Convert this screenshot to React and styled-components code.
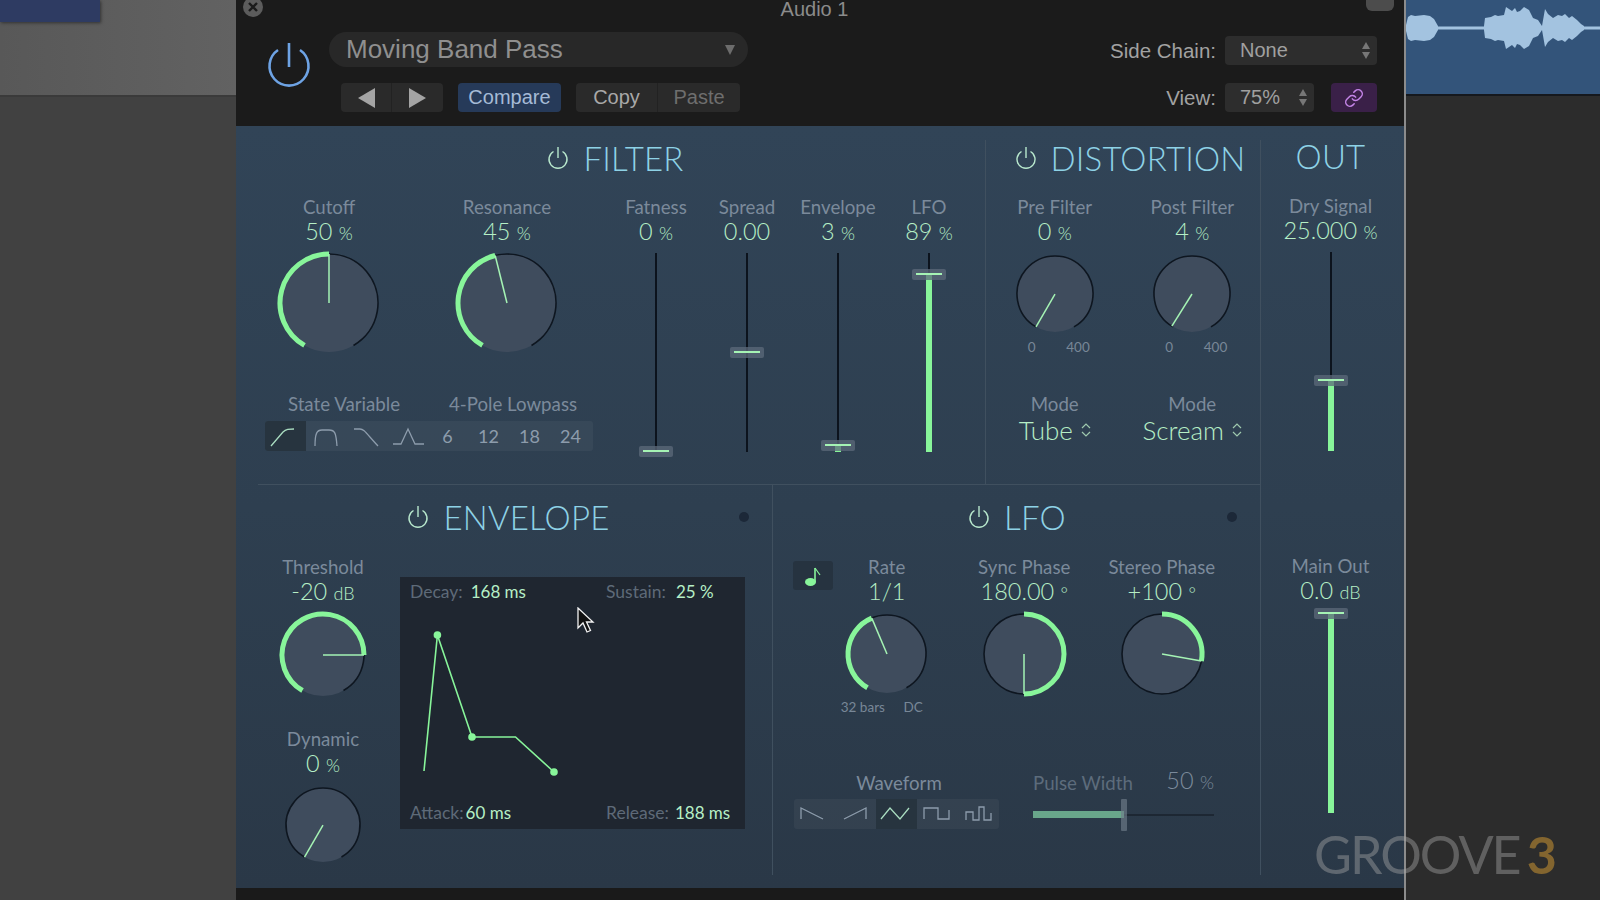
import React from 'react'
import styled, { createGlobalStyle } from 'styled-components'
import { Link } from 'lucide-react'

const GlobalStyle = createGlobalStyle`
  html, body {
    margin: 0;
    padding: 0;
    width: 1600px;
    height: 900px;
    overflow: hidden;
    background: #2c2c2c;
  }
`

const green = '#88f59a'
const valueGreen = '#b6efc6'

// page
const Page = styled.div`
  position: relative;
  display: grid;
  grid-template-columns: 236px 1168px 2px 194px;
  width: 1600px;
  height: 900px;
  overflow: hidden;
  font-family: Lato, 'Open Sans', sans-serif;
`
const LeftArea = styled.div`
  display: flex;
  flex-direction: column;
  border-right: 1px solid #777;
  margin-right: -1px;
  background: #414141;
`
const LeftTrack = styled.div`
  height: 95px;
  flex: none;
  background: linear-gradient(90deg, #585858, #626262);
  border-bottom: 2px solid #3a3a3a;
`
const Region = styled.div`
  width: 100px;
  height: 22px;
  background: #2e3b62;
  box-shadow: 1px 1px 3px #333;
`
const Strip = styled.div`
  background: #8c8c8c;
`
const RightArea = styled.div`
  display: flex;
  flex-direction: column;
  background: #2c2c2c;
`
const RightTrack = styled.div`
  height: 94px;
  flex: none;
  background: #33547a;
  border-bottom: 2px solid #15181d;
`

// plugin header
const Plugin = styled.div`
  display: flex;
  flex-direction: column;
  height: 900px;
`
const Header = styled.header`
  height: 126px;
  flex: none;
  background: #1b1b1b;
  color: #9a9a9a;
  font-family: 'Liberation Sans', Arial, sans-serif;
`
const TitleRow = styled.div`
  display: flex;
  justify-content: space-between;
  height: 32px;
  padding: 0 10px 0 7px;
  box-sizing: border-box;
`
const CloseButton = styled.svg`
  width: 20px;
  height: 20px;
  margin-top: -3px;
  flex: none;
`
const WindowTitle = styled.div`
  margin-top: 1px;
  font-size: 20px;
  line-height: 16px;
  color: #8b8b8b;
`
const MinButton = styled.div`
  width: 28px;
  height: 11px;
  border-radius: 0 0 6px 6px;
  background: #4c4c4c;
`
const HeaderBody = styled.div`
  display: flex;
  align-items: flex-start;
`
const MainPower = styled.svg`
  flex: none;
  width: 44px;
  height: 46px;
  margin: 10px 18px 0 31px;
`
const PresetColumn = styled.div`
  display: flex;
  flex-direction: column;
  width: 419px;
`
const PresetPill = styled.div`
  display: flex;
  align-items: center;
  justify-content: space-between;
  height: 35px;
  padding: 0 13px 0 17px;
  border-radius: 18px;
  background: #282828;
  font-size: 26px;
  color: #8f8f8f;
`
const PresetArrow = styled.span`
  width: 0;
  height: 0;
  border-left: 5px solid transparent;
  border-right: 5px solid transparent;
  border-top: 10px solid #6c6c6c;
`
const ButtonRow = styled.div`
  display: flex;
  margin: 16px 0 0 12px;
`
const ButtonGroup = styled.div`
  display: flex;
  flex: none;
  margin-right: ${(p) => p.$gap || 0}px;
  border-radius: 4px;
  overflow: hidden;
`
const HeadButton = styled.div`
  display: flex;
  align-items: center;
  justify-content: center;
  width: ${(p) => p.$w}px;
  height: 29px;
  font-size: 20px;
  background: ${(p) => (p.$active ? '#263a59' : '#2a2a2a')};
  color: ${(p) => (p.$active ? '#a5bad6' : p.$dim ? '#6e6e6e' : '#a8a8a8')};
  & + & {
    border-left: 1px solid #222;
  }
`
const Triangle = styled.span`
  width: 0;
  height: 0;
  border-top: 10px solid transparent;
  border-bottom: 10px solid transparent;
  ${(p) => (p.$left ? 'border-right' : 'border-left')}: 17px solid #a4a4a4;
`
const HeaderRight = styled.div`
  display: grid;
  grid-template-columns: auto 152px;
  column-gap: 9px;
  row-gap: 18px;
  align-items: center;
  margin: 4px 27px 0 auto;
`
const HeadLabel = styled.div`
  font-size: 20.5px;
  color: #a2a2a2;
  text-align: right;
`
const ViewRow = styled.div`
  display: flex;
  justify-content: space-between;
`
const Select = styled.div`
  display: flex;
  align-items: center;
  justify-content: space-between;
  box-sizing: border-box;
  width: ${(p) => p.$w}px;
  height: 29px;
  padding: 0 7px 0 15px;
  border-radius: 4px;
  background: #2d2d2d;
  font-size: 20px;
  color: #a0a0a0;
`
const Stepper = styled.span`
  display: flex;
  flex-direction: column;
  gap: 3px;
  &::before,
  &::after {
    content: '';
    border-left: 4px solid transparent;
    border-right: 4px solid transparent;
  }
  &::before {
    border-bottom: 7px solid #777;
  }
  &::after {
    border-top: 7px solid #777;
  }
`
const LinkButton = styled.div`
  display: flex;
  align-items: center;
  justify-content: center;
  width: 46px;
  height: 29px;
  border-radius: 4px;
  background: #3a2048;
  color: #c384e6;
`

// panel
const Panel = styled.main`
  display: grid;
  grid-template-columns: 1025px 143px;
  height: 762px;
  flex: none;
  background: linear-gradient(180deg, #314457 0%, #2e3f50 50%, #2a3847 100%);
`
const Footer = styled.div`
  flex: 1;
  background: #1a1a1a;
`
const MainColumn = styled.div`
  display: flex;
  flex-direction: column;
  margin: 14px 0 13px 22px;
  border-right: 1px solid #40505f;
`
const TopRow = styled.div`
  display: grid;
  grid-template-columns: 728px 275px;
  height: 344px;
  flex: none;
  box-sizing: content-box;
  border-bottom: 1px solid #40505f;
`
const BottomRow = styled.div`
  display: grid;
  grid-template-columns: 515px 488px;
  flex: 1;
`
const Section = styled.section`
  display: flex;
  flex-direction: column;
  min-width: 0;
  ${(p) => p.$divider && 'border-right: 1px solid #40505f;'}
`
const LowerSection = styled(Section)`
  padding-top: 14px;
`
const Heading = styled.div`
  position: relative;
  display: flex;
  align-items: center;
  justify-content: center;
  gap: 14px;
  height: 36px;
  flex: none;
  padding-left: ${(p) => p.$pl || 0}px;
  padding-right: ${(p) => p.$pr || 0}px;
  font-size: 33px;
  font-weight: 300;
  line-height: 36px;
  color: #8ed2e6;
  letter-spacing: 0.2px;
`
const Dot = styled.span`
  position: absolute;
  top: 13px;
  right: ${(p) => p.$right}px;
  width: 10px;
  height: 10px;
  border-radius: 50%;
  background: #1c2838;
`
const Label = styled.div`
  height: 24px;
  font-size: 18.7px;
  line-height: 24px;
  color: ${(p) => (p.$dim ? '#5d6c7c' : '#7b8a9b')};
  white-space: nowrap;
  text-align: center;
`
const Value = styled.div`
  height: 24px;
  font-size: 23.5px;
  font-weight: 300;
  line-height: 24px;
  color: ${(p) => (p.$dim ? '#7b8a9b' : valueGreen)};
  white-space: nowrap;
  text-align: center;
`
const Unit = styled.span`
  font-size: 18px;
`
const Control = styled.div`
  display: flex;
  flex-direction: column;
  align-items: center;
  min-width: 0;
`
const KnobSvg = styled.svg`
  display: block;
  flex: none;
  margin-top: ${(p) => p.$mt}px;
  overflow: visible;
`
const ScaleRow = styled.div`
  display: flex;
  justify-content: space-between;
  width: ${(p) => p.$w}px;
  margin-top: ${(p) => p.$mt}px;
  margin-left: ${(p) => p.$ml || 0}px;
  font-size: 13.5px;
  line-height: 16px;
  color: #788797;
  white-space: nowrap;
`
const PowerIcon = styled.svg`
  width: 22px;
  height: 24px;
  flex: none;
`

// filter
const FilterBody = styled.div`
  display: flex;
  padding-top: 19px;
`
const FilterLeft = styled.div`
  width: 352.5px;
  flex: none;
`
const KnobPair = styled.div`
  display: grid;
  grid-template-columns: 142px 142px;
  column-gap: 36px;
  height: 197px;
`
const TypeLabels = styled.div`
  display: grid;
  grid-template-columns: 158px 180px;
  margin-left: 7px;
`
const ToggleStrip = styled.div`
  display: flex;
  width: fit-content;
  margin: ${(p) => p.$m || '5px 0 0 7px'};
  border-radius: 3px;
  background: rgba(255, 255, 255, 0.045);
  overflow: hidden;
`
const Toggle = styled.div`
  display: flex;
  align-items: center;
  justify-content: center;
  box-sizing: border-box;
  width: 41px;
  height: 30px;
  font-size: 18px;
  color: #8d9cac;
  background: ${(p) => (p.$active ? '#27343f' : 'transparent')};
  & > svg {
    display: block;
  }
`
const SlopeToggle = styled(Toggle)`
  padding-right: 4px;
`
const FaderGroup = styled.div`
  display: grid;
  grid-template-columns: repeat(4, 91px);
`
const FaderBox = styled.div`
  position: relative;
  width: 36px;
  height: 199px;
  margin-top: ${(p) => p.$mt}px;
`
const FaderTrack = styled.div`
  position: absolute;
  left: 17px;
  top: 0;
  bottom: 0;
  width: 2px;
  background: #0c131d;
`
const FaderFill = styled.div`
  position: absolute;
  left: 15px;
  bottom: 0;
  width: 6px;
  background: ${green};
`
const FaderHandle = styled.div`
  position: absolute;
  left: 1px;
  width: 34px;
  height: 11px;
  margin-bottom: -5px;
  border-radius: 2px;
  background: rgba(92, 106, 122, 0.75);
  &::after {
    content: '';
    position: absolute;
    left: 4px;
    right: 4px;
    top: 4px;
    height: 2px;
    background: #a5f3b4;
  }
`

// distortion
const TwoColumns = styled.div`
  display: grid;
  grid-template-columns: 137.5px 137.5px;
  padding-top: 19px;
`
const KnobCell = styled.div`
  height: 197px;
`
const ModeValue = styled.div`
  display: flex;
  align-items: center;
  gap: 8px;
  height: 28px;
  font-size: 26px;
  font-weight: 300;
  color: ${valueGreen};
`
const UpDown = styled.svg`
  width: 10px;
  height: 16px;
`

// out
const OutColumn = styled.div`
  display: flex;
  flex-direction: column;
  align-items: center;
  padding: 12px 4px 0 0;
`
const Spacer = styled.div`
  height: 20px;
`
const MainOutControl = styled(Control)`
  margin-top: 103px;
`

// envelope
const EnvelopeBody = styled.div`
  display: grid;
  grid-template-columns: 130px 345px;
  column-gap: 12px;
  padding-top: 20px;
`
const KnobStack = styled.div`
  display: flex;
  flex-direction: column;
  align-items: center;
`
const SecondKnob = styled(Control)`
  margin-top: 26px;
`
const Display = styled.div`
  position: relative;
  display: flex;
  flex-direction: column;
  justify-content: space-between;
  box-sizing: border-box;
  height: 252px;
  margin-top: 22px;
  padding: 3px 0 4px;
  background: #1f2630;
`
const DisplayRow = styled.div`
  display: grid;
  grid-template-columns: 196px 149px;
`
const Reading = styled.div`
  display: flex;
  gap: ${(p) => p.$gap || 8}px;
  padding-left: 10px;
  font-size: 17.5px;
  line-height: 24px;
  color: #5e6a78;
`
const ReadingValue = styled.span`
  font-size: 17px;
  color: ${valueGreen};
`
const Graph = styled.svg`
  position: absolute;
  left: 0;
  top: 0;
  pointer-events: none;
`
const Cursor = styled.svg`
  position: absolute;
  left: 177px;
  top: 30px;
`

// lfo
const LfoBody = styled.div`
  display: grid;
  grid-template-columns: 45px repeat(3, 137.5px);
  height: 236px;
  padding-top: 20px;
  box-sizing: border-box;
`
const NoteButton = styled.div`
  display: flex;
  align-items: center;
  justify-content: center;
  width: 40px;
  height: 29px;
  margin: 6px 0 0 20px;
  border-radius: 3px;
  background: #263340;
`
const LfoLower = styled.div`
  display: flex;
  padding-left: 21px;
`
const WaveGroup = styled.div`
  width: 239px;
  flex: none;
`
const WaveLabel = styled(Label)`
  width: 210px;
`
const PulseGroup = styled.div`
  display: flex;
  flex-direction: column;
  width: 181px;
`
const PulseHeader = styled.div`
  display: flex;
  justify-content: space-between;
  align-items: flex-end;
  height: 24px;
`
const PulseValue = styled(Value)`
  margin-bottom: 3px;
`
const PulseSlider = styled.div`
  position: relative;
  height: 30px;
  margin-top: 5px;
  &::before {
    content: '';
    position: absolute;
    left: 0;
    right: 0;
    top: 14px;
    height: 2px;
    background: #1d2733;
  }
`
const PulseFill = styled.div`
  position: absolute;
  left: 0;
  top: 11px;
  height: 7px;
  background: #69a68b;
`
const PulseHandle = styled.div`
  position: absolute;
  top: -1px;
  width: 6px;
  height: 32px;
  margin-left: -3px;
  border-radius: 1px;
  background: rgba(110, 125, 138, 0.65);
`

const Watermark = styled.div`
  position: absolute;
  left: 1314px;
  top: 826px;
  display: flex;
  gap: 7px;
  font-size: 52px;
  font-weight: 400;
  line-height: 56px;
  letter-spacing: -2px;
  color: rgba(170, 170, 170, 0.42);
  pointer-events: none;
`
const WatermarkNumber = styled.span`
  color: rgba(190, 140, 50, 0.6);
  font-weight: 700;
`

const polar = (c, r, deg) => {
  const a = (deg * Math.PI) / 180
  return [c + r * Math.sin(a), c - r * Math.cos(a)]
}

const arc = (c, r, from, to) => {
  const [x1, y1] = polar(c, r, from)
  const [x2, y2] = polar(c, r, to)
  const large = to - from > 180 ? 1 : 0
  return `M${x1} ${y1} A${r} ${r} 0 ${large} 1 ${x2} ${y2}`
}

function Knob({ r, angle, from = -150, to = 150, lit = true, full, mt = 10 }) {
  const size = 2 * r + 8
  const c = r + 4
  const [px, py] = polar(c, r - 1, angle)
  return (
    <KnobSvg width={size} height={size} $mt={mt - 4}>
      <circle cx={c} cy={c} r={r - 1} fill="#3f4c5d" />
      {full ? (
        <circle cx={c} cy={c} r={r - 1} fill="none" stroke="#0e1620" strokeWidth="1.6" />
      ) : (
        <path d={arc(c, r - 1, -150, to)} fill="none" stroke="#0e1620" strokeWidth="1.6" />
      )}
      {lit && <path d={arc(c, r - 1, from, angle)} fill="none" stroke={green} strokeWidth="5" />}
      <line x1={c} y1={c} x2={px} y2={py} stroke="#a5f3b4" strokeWidth="1.5" />
    </KnobSvg>
  )
}

function Power() {
  return (
    <PowerIcon viewBox="0 0 22 24">
      <path d="M6.5 5.5 A9 9 0 1 0 15.5 5.5" fill="none" stroke="#b8e8cd" strokeWidth="1.4" />
      <line x1="11" y1="1" x2="11" y2="12" stroke="#b8e8cd" strokeWidth="1.4" />
    </PowerIcon>
  )
}

function Fader({ pos, fill = true, mt = 10 }) {
  return (
    <FaderBox $mt={mt}>
      <FaderTrack />
      {fill && <FaderFill style={{ height: `${pos * 199}px` }} />}
      <FaderHandle style={{ bottom: `${pos * 199}px` }} />
    </FaderBox>
  )
}

function Reads({ label, value, unit }) {
  return (
    <>
      <Label>{label}</Label>
      <Value>
        {value} {unit && <Unit>{unit}</Unit>}
      </Value>
    </>
  )
}

function Curve({ d, color = '#8d9cac' }) {
  return (
    <svg width="40" height="30" viewBox="0 0 40 30">
      <path d={d} fill="none" stroke={color} strokeWidth="1.3" />
    </svg>
  )
}

function UpDownIcon() {
  return (
    <UpDown viewBox="0 0 10 16">
      <path d="M1 6 L5 2 L9 6 M1 10 L5 14 L9 10" fill="none" stroke="#9fc9ae" strokeWidth="1.2" />
    </UpDown>
  )
}

const blob = [
  [0, 3], [2, 11], [5, 13], [9, 12], [18, 13], [24, 12], [28, 9], [32, 2],
]
const bigBlob = [
  [78, 2], [79, 10], [85, 11], [89, 13], [92, 12], [98, 13], [100, 21], [103, 19], [106, 17],
  [109, 20], [111, 16], [114, 17], [118, 21], [123, 18], [127, 10], [132, 8], [136, 2],
  [139, 19], [142, 14], [147, 10], [152, 13], [156, 12], [159, 14], [163, 10], [166, 12],
  [171, 8], [175, 4], [178, 2],
]
const shape = (pts) =>
  pts.map(([x, h]) => `${x},${28 - h}`).join(' ') +
  ' ' +
  [...pts].reverse().map(([x, h]) => `${x},${28 + h}`).join(' ')

export default function App() {
  return (
    <Page>
      <GlobalStyle />
      <LeftArea>
        <LeftTrack>
          <Region />
        </LeftTrack>
      </LeftArea>

      <Plugin>
        <Header>
          <TitleRow>
            <CloseButton viewBox="0 0 20 20">
              <circle cx="10" cy="10" r="10" fill="#5c5c5c" />
              <path d="M6 6 L14 14 M14 6 L6 14" stroke="#1b1b1b" strokeWidth="2.4" />
            </CloseButton>
            <WindowTitle>Audio 1</WindowTitle>
            <MinButton />
          </TitleRow>
          <HeaderBody>
            <MainPower viewBox="0 0 44 46">
              <path d="M11 8 A19.5 19.5 0 1 0 33 8" fill="none" stroke="#6ea3e4" strokeWidth="2.6" />
              <line x1="22" y1="1" x2="22" y2="25" stroke="#6ea3e4" strokeWidth="2.6" />
            </MainPower>
            <PresetColumn>
              <PresetPill>
                Moving Band Pass
                <PresetArrow />
              </PresetPill>
              <ButtonRow>
                <ButtonGroup $gap={15}>
                  <HeadButton $w={50}><Triangle $left /></HeadButton>
                  <HeadButton $w={51}><Triangle /></HeadButton>
                </ButtonGroup>
                <ButtonGroup $gap={15}>
                  <HeadButton $w={103} $active>Compare</HeadButton>
                </ButtonGroup>
                <ButtonGroup>
                  <HeadButton $w={81}>Copy</HeadButton>
                  <HeadButton $w={82} $dim>Paste</HeadButton>
                </ButtonGroup>
              </ButtonRow>
            </PresetColumn>
            <HeaderRight>
              <HeadLabel>Side Chain:</HeadLabel>
              <Select $w={152}>None<Stepper /></Select>
              <HeadLabel>View:</HeadLabel>
              <ViewRow>
                <Select $w={89}>75%<Stepper /></Select>
                <LinkButton><Link size={20} strokeWidth={1.8} /></LinkButton>
              </ViewRow>
            </HeaderRight>
          </HeaderBody>
        </Header>

        <Panel>
          <MainColumn>
            <TopRow>
              <Section $divider>
                <Heading $pr={12}><Power />FILTER</Heading>
                <FilterBody>
                  <FilterLeft>
                    <KnobPair>
                      <Control>
                        <Reads label="Cutoff" value="50" unit="%" />
                        <Knob r={50} angle={0} />
                      </Control>
                      <Control>
                        <Reads label="Resonance" value="45" unit="%" />
                        <Knob r={50} angle={-14} />
                      </Control>
                    </KnobPair>
                    <TypeLabels>
                      <Label>State Variable</Label>
                      <Label>4-Pole Lowpass</Label>
                    </TypeLabels>
                    <ToggleStrip>
                      <Toggle $active><Curve d="M5 25 L17 11 C20 8 23 8 28 8" color="#a9dcc0" /></Toggle>
                      <Toggle><Curve d="M8 25 C8 12 10 9 15 9 H22 C28 9 29 12 30 25" /></Toggle>
                      <Toggle><Curve d="M6 8 H12 C16 8 18 12 30 25" /></Toggle>
                      <Toggle><Curve d="M4 23 H12 L19 8 L26 23 H35" /></Toggle>
                      <SlopeToggle>6</SlopeToggle>
                      <SlopeToggle>12</SlopeToggle>
                      <SlopeToggle>18</SlopeToggle>
                      <SlopeToggle>24</SlopeToggle>
                    </ToggleStrip>
                  </FilterLeft>
                  <FaderGroup>
                    <Control>
                      <Reads label="Fatness" value="0" unit="%" />
                      <Fader pos={0} />
                    </Control>
                    <Control>
                      <Reads label="Spread" value="0.00" />
                      <Fader pos={0.5} fill={false} />
                    </Control>
                    <Control>
                      <Reads label="Envelope" value="3" unit="%" />
                      <Fader pos={0.03} />
                    </Control>
                    <Control>
                      <Reads label="LFO" value="89" unit="%" />
                      <Fader pos={0.89} />
                    </Control>
                  </FaderGroup>
                </FilterBody>
              </Section>

              <Section>
                <Heading $pl={13}><Power />DISTORTION</Heading>
                <TwoColumns>
                  <KnobCell>
                    <Control>
                      <Reads label="Pre Filter" value="0" unit="%" />
                      <Knob r={39} angle={-150} lit={false} mt={12} />
                      <ScaleRow $w={62} $mt={2} $ml={8}><span>0</span><span>400</span></ScaleRow>
                    </Control>
                  </KnobCell>
                  <KnobCell>
                    <Control>
                      <Reads label="Post Filter" value="4" unit="%" />
                      <Knob r={39} angle={-148} lit={false} mt={12} />
                      <ScaleRow $w={62} $mt={2} $ml={8}><span>0</span><span>400</span></ScaleRow>
                    </Control>
                  </KnobCell>
                  <Control>
                    <Label>Mode</Label>
                    <ModeValue>Tube<UpDownIcon /></ModeValue>
                  </Control>
                  <Control>
                    <Label>Mode</Label>
                    <ModeValue>Scream<UpDownIcon /></ModeValue>
                  </Control>
                </TwoColumns>
              </Section>
            </TopRow>

            <BottomRow>
              <LowerSection $divider>
                <Heading $pr={13}><Power />ENVELOPE<Dot $right={23} /></Heading>
                <EnvelopeBody>
                  <KnobStack>
                    <Control>
                      <Reads label="Threshold" value="-20" unit="dB" />
                      <Knob r={42} angle={90} mt={10} />
                    </Control>
                    <SecondKnob>
                      <Reads label="Dynamic" value="0" unit="%" />
                      <Knob r={38} angle={-150} lit={false} mt={12} />
                    </SecondKnob>
                  </KnobStack>
                  <Display>
                    <DisplayRow>
                      <Reading $gap={8}>Decay:<ReadingValue>168 ms</ReadingValue></Reading>
                      <Reading $gap={10}>Sustain:<ReadingValue>25 %</ReadingValue></Reading>
                    </DisplayRow>
                    <DisplayRow>
                      <Reading $gap={2}>Attack:<ReadingValue>60 ms</ReadingValue></Reading>
                      <Reading $gap={6}>Release:<ReadingValue>188 ms</ReadingValue></Reading>
                    </DisplayRow>
                    <Graph width="345" height="252">
                      <polyline
                        points="24,194 37.4,58 72,160 115.5,160 154,195"
                        fill="none"
                        stroke={green}
                        strokeWidth="1.6"
                      />
                      <circle cx="37.4" cy="58" r="3.8" fill={green} />
                      <circle cx="72" cy="160" r="3.8" fill={green} />
                      <circle cx="154" cy="195" r="3.8" fill={green} />
                    </Graph>
                    <Cursor width="18" height="27" viewBox="0 0 18 27">
                      <path d="M1 1 L1 21 L6 16 L10 25 L13.5 23.5 L9.5 15 L16 15 Z" fill="#111" stroke="#f2f2f2" strokeWidth="1.3" />
                    </Cursor>
                  </Display>
                </EnvelopeBody>
              </LowerSection>

              <LowerSection>
                <Heading><Power />LFO<Dot $right={24} /></Heading>
                <LfoBody>
                  <div>
                    <NoteButton>
                      <svg width="18" height="22" viewBox="0 0 18 22">
                        <ellipse cx="6.5" cy="17" rx="5.5" ry="4" fill={green} />
                        <path d="M11 17 V3" stroke={green} strokeWidth="1.6" />
                        <path d="M11 3 L16 10" stroke={green} strokeWidth="1.2" fill="none" />
                      </svg>
                    </NoteButton>
                  </div>
                  <Control>
                    <Reads label="Rate" value="1/1" />
                    <Knob r={40} angle={-23} mt={11} />
                    <ScaleRow $w={82} $mt={1} $ml={-10}><span>32 bars</span><span>DC</span></ScaleRow>
                  </Control>
                  <Control>
                    <Reads label="Sync Phase" value="180.00" unit="°" />
                    <Knob r={41} angle={180} from={0} full mt={10} />
                  </Control>
                  <Control>
                    <Reads label="Stereo Phase" value="+100" unit="°" />
                    <Knob r={41} angle={100} from={0} full mt={10} />
                  </Control>
                </LfoBody>
                <LfoLower>
                  <WaveGroup>
                    <WaveLabel>Waveform</WaveLabel>
                    <ToggleStrip $m="4px 0 0 0">
                      <Toggle><Curve d="M6 20 V9 L28 20" /></Toggle>
                      <Toggle><Curve d="M8 20 L30 9 V20" /></Toggle>
                      <Toggle $active><Curve d="M4 20 L13 9 L23 20 L32 9" color="#a9dcc0" /></Toggle>
                      <Toggle><Curve d="M6 20 V9 H20 V20 H31 V11" /></Toggle>
                      <Toggle><Curve d="M7 21 V13 H14 V21 H20 V8 H25 V21 H32 V14" /></Toggle>
                    </ToggleStrip>
                  </WaveGroup>
                  <PulseGroup>
                    <PulseHeader>
                      <Label $dim>Pulse Width</Label>
                      <PulseValue $dim>50 <Unit>%</Unit></PulseValue>
                    </PulseHeader>
                    <PulseSlider>
                      <PulseFill style={{ width: '50%' }} />
                      <PulseHandle style={{ left: '50%' }} />
                    </PulseSlider>
                  </PulseGroup>
                </LfoLower>
              </LowerSection>
            </BottomRow>
          </MainColumn>

          <OutColumn>
            <Heading>OUT</Heading>
            <Control>
              <Spacer />
              <Reads label="Dry Signal" value="25.000" unit="%" />
              <Fader pos={0.35} />
            </Control>
            <MainOutControl>
              <Reads label="Main Out" value="0.0" unit="dB" />
              <Fader pos={1} mt={12} />
            </MainOutControl>
          </OutColumn>
        </Panel>
        <Footer />
      </Plugin>

      <Strip />

      <RightArea>
        <RightTrack>
          <svg width="194" height="94">
            <rect x="0" y="26.5" width="194" height="3" fill="#a3c3e0" />
            <polygon points={shape(blob)} fill="#a3c3e0" />
            <polygon points={shape(bigBlob)} fill="#a3c3e0" />
          </svg>
        </RightTrack>
      </RightArea>

      <Watermark>
        GROOVE
        <WatermarkNumber>3</WatermarkNumber>
      </Watermark>
    </Page>
  )
}
